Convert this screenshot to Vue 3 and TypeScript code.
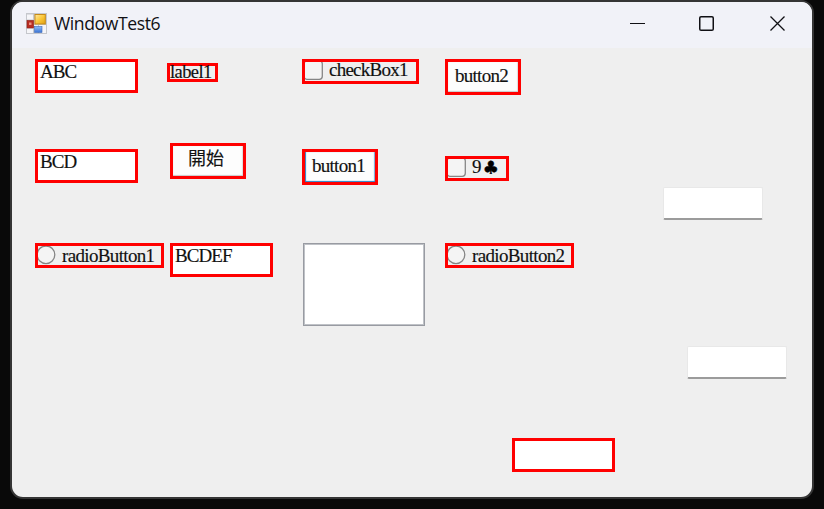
<script setup lang="ts">
import { ref } from 'vue'

type Kind = 'text' | 'label' | 'check' | 'radio' | 'button' | 'list'

interface Control {
  id: string
  kind: Kind
  text: string
  marked: boolean
}

const title = ref<string>('WindowTest6')

const controls = ref<Control[]>([
  { id: 'abc', kind: 'text', text: 'ABC', marked: true },
  { id: 'label1', kind: 'label', text: 'label1', marked: true },
  { id: 'check1', kind: 'check', text: 'checkBox1', marked: true },
  { id: 'button2', kind: 'button', text: 'button2', marked: true },
  { id: 'bcd', kind: 'text', text: 'BCD', marked: true },
  { id: 'start', kind: 'button', text: '開始', marked: true },
  { id: 'button1', kind: 'button', text: 'button1', marked: true },
  { id: 'card', kind: 'check', text: '9', marked: true },
  { id: 'free1', kind: 'text', text: '', marked: false },
  { id: 'radio1', kind: 'radio', text: 'radioButton1', marked: true },
  { id: 'bcdef', kind: 'text', text: 'BCDEF', marked: true },
  { id: 'list', kind: 'list', text: '', marked: false },
  { id: 'radio2', kind: 'radio', text: 'radioButton2', marked: true },
  { id: 'free2', kind: 'text', text: '', marked: false },
  { id: 'free3', kind: 'text', text: '', marked: true },
])
</script>

<template>
  <div class="desktop">
    <main class="window">
      <header class="titlebar">
        <svg class="app-icon" width="21" height="21" viewBox="0 0 21 21">
          <defs>
            <linearGradient id="gold" x1="0" y1="0" x2="1" y2="1">
              <stop offset="0" stop-color="#ffe9a0" />
              <stop offset="0.5" stop-color="#fbc83a" />
              <stop offset="1" stop-color="#e0a010" />
            </linearGradient>
            <linearGradient id="blue" x1="0" y1="0" x2="0" y2="1">
              <stop offset="0" stop-color="#8fbcf8" />
              <stop offset="1" stop-color="#3b74d4" />
            </linearGradient>
          </defs>
          <rect width="21" height="21" fill="#c5c7cc" />
          <rect x="1" y="1.5" width="6" height="5" fill="#f5f5f8" />
          <rect x="1" y="15.5" width="6" height="4.5" fill="#f5f5f8" />
          <rect x="8" y="12" width="4" height="8" fill="#eef0f5" />
          <rect x="13" y="12" width="7" height="8" fill="#f5f5f8" />
          <rect x="1" y="7.5" width="6.5" height="7.5" fill="#b72d22" stroke="#8f1f18" stroke-width="0.6" />
          <rect x="3" y="9.5" width="2.5" height="2.5" fill="#ec9082" />
          <rect x="9" y="1.5" width="10.3" height="9.5" fill="url(#gold)" stroke="#c78b18" stroke-width="1" />
          <rect x="8.5" y="13.5" width="7.5" height="6" fill="url(#blue)" stroke="#3c69b8" stroke-width="0.6" />
        </svg>
        <h1 class="title">{{ title }}</h1>
        <svg class="caption-icons" width="155" height="16" viewBox="0 0 155 16" fill="none" stroke="#101014">
          <path d="M0 7.5H15" stroke-width="1" />
          <rect x="69.75" y="0.75" width="13.5" height="13.5" rx="1.3" stroke-width="1.5" />
          <path d="M140.5 0.5L154.5 14.5M154.5 0.5L140.5 14.5" stroke-width="1.3" />
        </svg>
      </header>
      <section class="form">
        <div
          v-for="c in controls"
          :key="c.id"
          class="control"
          :class="[c.kind, c.id, { marked: c.marked }]"
        >
          <svg v-if="c.kind === 'check'" class="glyph" width="19" height="19" viewBox="0 0 19 19">
            <rect x="-1" y="-1" width="18.3" height="18.3" rx="3" fill="#f4f4f4" stroke="#858585" stroke-width="1.3" />
          </svg>
          <svg v-if="c.kind === 'radio'" class="glyph" width="19" height="19" viewBox="0 0 19 19">
            <circle cx="8" cy="8.8" r="8.8" fill="#f4f4f4" stroke="#858585" stroke-width="1.3" />
          </svg>
          <span v-if="c.text" class="caption">{{ c.text }}</span>
          <span v-if="c.id === 'card'" class="suit">♣</span>
        </div>
      </section>
    </main>
  </div>
</template>

<style>
body {
  margin: 0;
  background: #090909;
}
</style>

<style scoped>
.desktop {
  box-sizing: border-box;
  width: 824px;
  height: 509px;
  padding: 0 10px 10px;
  background: #090909;
  overflow: hidden;
}
.window {
  box-sizing: border-box;
  height: 499px;
  border: 2px solid #353535;
  border-radius: 13px;
  background: #efefef;
  overflow: hidden;
}
.titlebar {
  box-sizing: border-box;
  display: flex;
  align-items: center;
  height: 46px;
  padding: 0 27px 2px 14px;
  background: #f1f2f8;
}
.app-icon {
  flex: none;
  margin-top: -1px;
}
.title {
  flex: 1;
  margin: -2px 0 0 7px;
  font: 400 17.6px/24px "Open Sans", "Noto Sans", sans-serif;
  letter-spacing: -0.42px;
  color: #101014;
}
.caption-icons {
  flex: none;
}
.form {
  display: grid;
  grid-template-columns: 132px 135px 143px 67px 151px 24px 1fr;
  grid-template-rows: 84px 44px 56px 103px 92px 1fr;
  align-items: start;
  justify-items: start;
  height: 438px;
  padding: 11px 0 0 23px;
  font: 19px/20px "Liberation Serif", "Noto Sans CJK TC", serif;
  color: #111;
  -webkit-text-stroke: 0.15px #111;
}
.control {
  box-sizing: border-box;
  display: flex;
  white-space: nowrap;
}
.marked {
  border: 3px solid #ff0000;
}
.text {
  width: 103px;
  height: 34px;
  padding-left: 2px;
  background: #fff;
  letter-spacing: -0.9px;
}
.text:not(.marked) {
  width: 100px;
  height: 33px;
  border: 1px solid #e8e8e8;
  border-bottom: 2px solid #9b9b9b;
  border-radius: 2px;
}
.button {
  justify-content: center;
  width: 76px;
  height: 36px;
  padding-top: 4px;
  padding-right: 3px;
  background: #fdfdfd;
  box-shadow: inset 0 -1px 1px #c9c9c9, inset -1px 0 1px #dedede;
  letter-spacing: -0.75px;
}
.check,
.radio {
  height: 25px;
}
.glyph {
  flex: none;
}
.check .caption,
.radio .caption {
  margin-left: 5px;
  margin-top: -2px;
  letter-spacing: -0.75px;
}
.radio .caption {
  margin-top: 0;
  letter-spacing: -0.65px;
}
.abc { grid-area: 1 / 1; }
.label1 {
  grid-area: 1 / 2;
  width: 51px;
  height: 19px;
  margin-top: 4px;
  font-size: 18.5px;
  line-height: 13px;
  letter-spacing: -0.6px;
}
.check1 { grid-area: 1 / 3; width: 117px; }
.button2 { grid-area: 1 / 4; }
.bcd { grid-area: 2 / 1; margin-top: 6px; }
.start {
  grid-area: 2 / 2;
  margin-left: 3px;
  padding-top: 3px;
  padding-right: 4px;
  font-size: 18px;
  letter-spacing: 0;
}
.button1 {
  grid-area: 2 / 3;
  margin-top: 6px;
  box-shadow: inset 1px -1px 1px #2a80c4, inset -1px 0 1px #75acd6;
}
.card { grid-area: 2 / 4; width: 64px; margin-top: 13px; }
.suit {
  margin-left: 2px;
  margin-top: -1px;
  font: 18px/20px "DejaVu Sans", sans-serif;
  color: #000;
  -webkit-text-stroke: 0.5px #000;
}
.free1 { grid-area: 3 / 6; }
.radio1 { grid-area: 4 / 1; width: 129px; }
.bcdef { grid-area: 4 / 2; margin-left: 3px; }
.list {
  grid-area: 4 / 3;
  width: 122px;
  height: 83px;
  margin-left: 1px;
  border: 1px solid #989ba2;
  background: #fff;
  box-shadow: inset 0 0 0 1px #bfc2c7;
}
.radio2 { grid-area: 4 / 4; width: 129px; }
.free2 { grid-area: 5 / 7; }
.free3 { grid-area: 6 / 5; }
</style>
